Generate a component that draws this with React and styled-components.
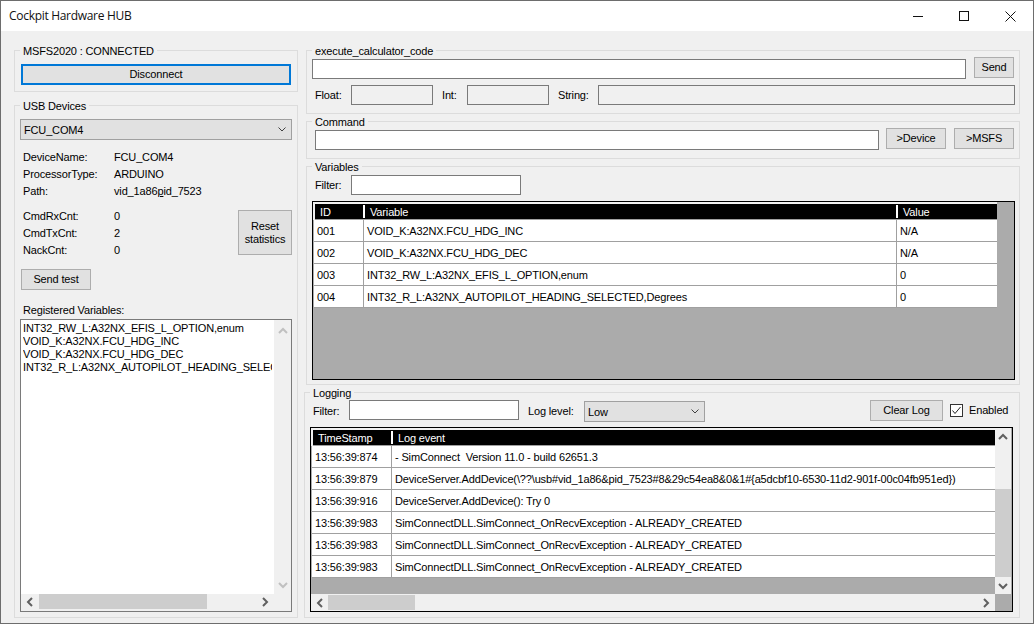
import React from "react";
import styled, { createGlobalStyle } from "styled-components";

const Global = createGlobalStyle`
  html, body { margin: 0; padding: 0; background: #ffffff; }
  * { box-sizing: border-box; }
  body { font-family: "Liberation Sans", Arial, sans-serif; font-size: 11px; letter-spacing: -0.15px; color: #000; }
`;

const Window = styled.div`
  width: 1034px; height: 624px; border: 1px solid #6d6d6d;
  background: #f0f0f0; display: flex; flex-direction: column; overflow: hidden;
`;
const TitleBar = styled.header`
  height: 30px; flex: none; background: #fff; display: flex; align-items: center; padding-left: 8px;
`;
const Title = styled.h1`
  margin: 0; flex: 1; font: 400 12px/16px "Open Sans", "Noto Sans", sans-serif; letter-spacing: -0.3px; color: #111;
`;
const CaptionButton = styled.span`
  width: 46px; height: 30px; display: flex; align-items: center; justify-content: center;
`;
const Client = styled.main`
  flex: 1; min-height: 0; display: flex; gap: 6px; padding: 13px 0 5px 13px;
`;
const LeftColumn = styled.div`
  width: 284px; flex: none; display: flex; flex-direction: column; gap: 7px;
`;
const RightColumn = styled.div`
  width: 716px; flex: none; display: flex; flex-direction: column; gap: 1px;
`;
const Group = styled.fieldset`
  margin: 0 0 0 ${p => p.$inset || 0}px; min-width: 0; border: 1px solid #dcdcdc;
  padding: 0 5px ${p => p.$pb || 0}px 5px;
  ${p => p.$grow && "flex: 1; min-height: 0; display: flex; flex-direction: column;"}
`;
const Legend = styled.legend`
  padding: 0 3px; font-size: 11px; line-height: 15px; height: 13px;
`;
const Row = styled.div`
  display: flex; align-items: flex-start; margin-top: ${p => p.$mt || 0}px;
`;
const Button = styled.button`
  width: ${p => p.$w}px; height: ${p => p.$h || 21}px; padding: 0; flex: none;
  margin: ${p => p.$m || 0};
  background: #e1e1e1; border: ${p => p.$focus ? "2px solid #0078d7" : "1px solid #adadad"};
  font: 11px/13px "Liberation Sans", Arial, sans-serif; letter-spacing: inherit; color: #000;
`;
const Combo = styled.div`
  width: ${p => p.$w}px; height: 21px; flex: none; background: #e1e1e1; border: 1px solid #a0a0a0;
  margin-top: ${p => p.$mt || 0}px;
  display: flex; align-items: center; justify-content: space-between; padding: 0 5px 0 3px;
`;
const Field = styled.div`
  width: ${p => p.$w}px; height: 20px; flex: none;
  margin: ${p => p.$mt || 0}px ${p => p.$mr || 0}px 0 ${p => p.$ml || 0}px;
  background: ${p => p.$readonly ? "#f0f0f0" : "#fff"}; border: 1px solid #7a7a7a;
`;
const FieldLabel = styled.label`
  width: ${p => p.$w}px; flex: none; line-height: 20px; margin-left: ${p => p.$ml ?? 3}px;
  margin-top: ${p => p.$mt || 0}px;
`;
const InfoList = styled.dl`
  margin: ${p => p.$mt || 0}px 0 0 3px; display: grid; grid-template-columns: 91px 1fr; grid-auto-rows: 17px; line-height: 17px;
  dt, dd { margin: 0; }
`;
const StatsRow = styled.div`
  display: flex; justify-content: space-between; align-items: flex-start; margin-top: 8px; height: 51px;
`;
const Caption = styled.div`
  margin: 14px 0 2px 3px; line-height: 13px; height: 13px;
`;
const ListBox = styled.div`
  flex: 1; min-height: 0; width: 272px; margin-bottom: 5px; border: 1px solid #7a7a7a; background: #f0f0f0;
  display: grid; grid-template-columns: 253px 17px; grid-template-rows: 1fr 17px;
`;
const ListItems = styled.div`
  background: #fff; overflow: hidden; padding: 2px 2px 0 2px; line-height: 13px; white-space: nowrap;
`;
const ListItem = styled.div` height: 13px; overflow: hidden; `;
const VScroll = styled.div`
  background: #f0f0f0; display: flex; flex-direction: column; align-items: center; padding: ${p => p.$pad};
`;
const ArrowCell = styled.div`
  flex: none; width: ${p => p.$w || 16}px; height: ${p => p.$h || 16}px; display: flex; align-items: center; justify-content: center;
`;
const VTrack = styled.div` flex: 1; width: 100%; padding-top: ${p => p.$top || 0}px; display: flex; `;
const VThumb = styled.div` flex: none; width: 100%; height: ${p => p.$h}px; background: #cdcdcd; `;
const HScroll = styled.div`
  background: #f0f0f0; display: flex; align-items: stretch; height: 17px; padding: ${p => p.$pad};
`;
const HTrack = styled.div` flex: 1; display: flex; `;
const HThumb = styled.div` width: ${p => p.$w}px; background: #cdcdcd; `;

const DataGrid = styled.div`
  width: 703px; height: ${p => p.$h}px; margin-top: ${p => p.$mt || 0}px; flex: none;
  border: 1px solid #000; background: #ababab; display: grid;
  grid-template-columns: ${p => p.$scroll ? "684px 16px" : "1fr"}; grid-template-rows: ${p => p.$scroll ? "1fr 17px" : "1fr"};
`;
const GridBody = styled.div`
  background: #ababab; border-top: 2px solid #f0f0f0; padding-left: 1px; width: 684px; overflow: hidden;
`;
const HeaderRow = styled.div`
  display: grid; grid-template-columns: ${p => p.$cols}; height: 16px; background: #000; color: #fff;
  border-bottom: 1px solid #a0a0a0; margin-left: 1px; box-shadow: -2px 0 0 #f0f0f0;
`;
const HeaderCell = styled.div`
  line-height: 16px; padding-left: 5px; height: 15px;
  ${p => p.$divider && `border-left: 2px solid #fff; height: 13px; margin-top: 1px; line-height: 14px;`}
`;
const DataRow = styled.div`
  display: grid; grid-template-columns: ${p => p.$cols}; height: 22px; background: #fff; border-bottom: 1px solid #a0a0a0;
`;
const DataCell = styled.div`
  line-height: 22px; padding-left: 3px; white-space: nowrap; overflow: hidden;
  ${p => p.$rule && "border-right: 1px solid #a0a0a0;"}
`;
const CheckBox = styled.span`
  width: 13px; height: 13px; flex: none; background: #fff; border: 1px solid #333; margin: 4px 6px 0 7px;
  display: flex; align-items: center; justify-content: center;
`;
const CheckLabel = styled.span` line-height: 21px; `;
const Mnemonic = styled.u` text-underline-offset: 1px; `;

const Chevron = ({ dir, color = "#606060" }) => {
  const pts = { up: "1,6 5,2 9,6", down: "1,2 5,6 9,2", left: "6,1 2,5 6,9", right: "2,1 6,5 2,9" }[dir];
  const vertical = dir === "up" || dir === "down";
  return (
    <svg width={vertical ? 10 : 8} height={vertical ? 8 : 10} viewBox={vertical ? "0 0 10 8" : "0 0 8 10"} fill="none">
      <polyline points={pts} stroke={color} strokeWidth="2" />
    </svg>
  );
};
const ComboArrow = () => (
  <svg width="8" height="5" viewBox="0 0 8 5" fill="none"><polyline points="0.5,0.5 4,4 7.5,0.5" stroke="#404040" strokeWidth="1" /></svg>
);

const varCols = "48px 533px 100px";
const varRowCols = "50px 533px 99px";
const logHeadCols = "78px 603px";
const logRowCols = "80px 603px";
const variables = [
  ["001", "VOID_K:A32NX.FCU_HDG_INC", "N/A"],
  ["002", "VOID_K:A32NX.FCU_HDG_DEC", "N/A"],
  ["003", "INT32_RW_L:A32NX_EFIS_L_OPTION,enum", "0"],
  ["004", "INT32_R_L:A32NX_AUTOPILOT_HEADING_SELECTED,Degrees", "0"],
];
const logs = [
  ["13:56:39:874", "- SimConnect\u00a0 Version 11.0 - build 62651.3"],
  ["13:56:39:879", "DeviceServer.AddDevice(\\??\\usb#vid_1a86&pid_7523#8&29c54ea8&0&1#{a5dcbf10-6530-11d2-901f-00c04fb951ed})"],
  ["13:56:39:916", "DeviceServer.AddDevice(): Try 0"],
  ["13:56:39:983", "SimConnectDLL.SimConnect_OnRecvException - ALREADY_CREATED"],
  ["13:56:39:983", "SimConnectDLL.SimConnect_OnRecvException - ALREADY_CREATED"],
  ["13:56:39:983", "SimConnectDLL.SimConnect_OnRecvException - ALREADY_CREATED"],
];
const registered = [
  "INT32_RW_L:A32NX_EFIS_L_OPTION,enum",
  "VOID_K:A32NX.FCU_HDG_INC",
  "VOID_K:A32NX.FCU_HDG_DEC",
  "INT32_R_L:A32NX_AUTOPILOT_HEADING_SELECTED,Degrees",
];

export default function App() {
  return (
    <Window>
      <Global />
      <TitleBar>
        <Title>Cockpit Hardware HUB</Title>
        <CaptionButton>
          <svg width="10" height="10" viewBox="0 0 10 10"><path d="M0 5.5H10" stroke="#111" fill="none" /></svg>
        </CaptionButton>
        <CaptionButton>
          <svg width="10" height="10" viewBox="0 0 10 10"><rect x="0.5" y="0.5" width="9" height="9" stroke="#111" fill="none" /></svg>
        </CaptionButton>
        <CaptionButton>
          <svg width="11" height="11" viewBox="0 0 11 11"><path d="M0.5 0.5L10.5 10.5M10.5 0.5L0.5 10.5" stroke="#111" fill="none" /></svg>
        </CaptionButton>
      </TitleBar>
      <Client>
        <LeftColumn>
          <Group $pb={6}>
            <Legend>MSFS2020 : CONNECTED</Legend>
            <Row $mt={7}><Button $focus $w={270} $m="0 0 0 1px">Disconnect</Button></Row>
          </Group>
          <Group $grow>
            <Legend>USB Devices</Legend>
            <Combo $w={272} $mt={7}>FCU_COM4<ComboArrow /></Combo>
            <InfoList $mt={9}>
              <dt>DeviceName:</dt><dd>FCU_COM4</dd>
              <dt>ProcessorType:</dt><dd>ARDUINO</dd>
              <dt>Path:</dt><dd>vid_1a86<Mnemonic>p</Mnemonic>id_7523</dd>
            </InfoList>
            <StatsRow>
              <InfoList>
                <dt>CmdRxCnt:</dt><dd>0</dd>
                <dt>CmdTxCnt:</dt><dd>2</dd>
                <dt>NackCnt:</dt><dd>0</dd>
              </InfoList>
              <Button $w={54} $h={45} $m="2px 0 0 0">Reset<br />statistics</Button>
            </StatsRow>
            <Row $mt={10}><Button $w={70} $m="0 0 0 1px">Send test</Button></Row>
            <Caption>Registered Variables:</Caption>
            <ListBox>
              <ListItems>
                {registered.map(t => <ListItem key={t}>{t}</ListItem>)}
              </ListItems>
              <VScroll $pad="3px 0 1px">
                <ArrowCell><Chevron dir="up" color="#c0c0c0" /></ArrowCell>
                <VTrack />
                <ArrowCell><Chevron dir="down" color="#c0c0c0" /></ArrowCell>
              </VScroll>
              <HScroll $pad="0 0 2px">
                <ArrowCell $w={18} $h={15}><Chevron dir="left" /></ArrowCell>
                <HTrack><HThumb $w={168} /></HTrack>
                <ArrowCell $w={18} $h={15}><Chevron dir="right" /></ArrowCell>
              </HScroll>
              <div />
            </ListBox>
          </Group>
        </LeftColumn>
        <RightColumn>
          <Group $inset={2} $pb={8}>
            <Legend>execute_calculator_code</Legend>
            <Row>
              <Field $w={654} $mt={2} $mr={8} />
              <Button $w={40}>Send</Button>
            </Row>
            <Row $mt={6}>
              <FieldLabel $w={36}>Float:</FieldLabel>
              <Field $w={82} $readonly $mr={9} />
              <FieldLabel $w={25} $ml={0}>Int:</FieldLabel>
              <Field $w={82} $readonly $mr={9} />
              <FieldLabel $w={40} $ml={0}>String:</FieldLabel>
              <Field $w={417} $readonly />
            </Row>
          </Group>
          <Group $inset={2} $pb={8}>
            <Legend>Command</Legend>
            <Row>
              <Field $w={564} $mt={2} $mr={7} $ml={3} />
              <Button $w={60} $m="0 8px 0 0">&gt;Device</Button>
              <Button $w={60}>&gt;MSFS</Button>
            </Row>
          </Group>
          <Group $inset={2} $pb={4}>
            <Legend>Variables</Legend>
            <Row $mt={2}>
              <FieldLabel $w={36}>Filter:</FieldLabel>
              <Field $w={170} />
            </Row>
            <DataGrid $h={179} $mt={6}>
              <GridBody>
                <HeaderRow $cols={varCols}>
                  <HeaderCell>ID</HeaderCell>
                  <HeaderCell $divider>Variable</HeaderCell>
                  <HeaderCell $divider>Value</HeaderCell>
                </HeaderRow>
                {variables.map(r => (
                  <DataRow key={r[0]} $cols={varRowCols}>
                    <DataCell $rule>{r[0]}</DataCell>
                    <DataCell $rule>{r[1]}</DataCell>
                    <DataCell>{r[2]}</DataCell>
                  </DataRow>
                ))}
              </GridBody>
            </DataGrid>
          </Group>
          <Group $grow>
            <Legend>Logging</Legend>
            <Row $mt={1}>
              <FieldLabel $w={36} $mt={1}>Filter:</FieldLabel>
              <Field $w={170} />
              <FieldLabel $w={56} $ml={9} $mt={1}>Log level:</FieldLabel>
              <Combo $w={121} $mt={1}>Low<ComboArrow /></Combo>
              <Button $w={73} $m="0 0 0 165px">Clear Log</Button>
              <CheckBox>
                <svg width="11" height="11" viewBox="0 0 11 11" fill="none"><polyline points="1.5,5.5 4,8.5 9.5,2" stroke="#222" strokeWidth="1" /></svg>
              </CheckBox>
              <CheckLabel>Enabled</CheckLabel>
            </Row>
            <DataGrid $h={185} $mt={5} $scroll>
              <GridBody>
                <HeaderRow $cols={logHeadCols}>
                  <HeaderCell>TimeStamp</HeaderCell>
                  <HeaderCell $divider>Log event</HeaderCell>
                </HeaderRow>
                {logs.map((r, i) => (
                  <DataRow key={i} $cols={logRowCols}>
                    <DataCell $rule>{r[0]}</DataCell>
                    <DataCell>{r[1]}</DataCell>
                  </DataRow>
                ))}
              </GridBody>
              <VScroll $pad="1px 0 0">
                <ArrowCell><Chevron dir="up" /></ArrowCell>
                <VTrack $top={44}><VThumb $h={88} /></VTrack>
                <ArrowCell><Chevron dir="down" /></ArrowCell>
              </VScroll>
              <HScroll $pad="1px 0">
                <ArrowCell $w={17} $h={15}><Chevron dir="left" /></ArrowCell>
                <HTrack><HThumb $w={87} /></HTrack>
                <ArrowCell $w={18} $h={15}><Chevron dir="right" /></ArrowCell>
              </HScroll>
              <div />
            </DataGrid>
          </Group>
        </RightColumn>
      </Client>
    </Window>
  );
}
